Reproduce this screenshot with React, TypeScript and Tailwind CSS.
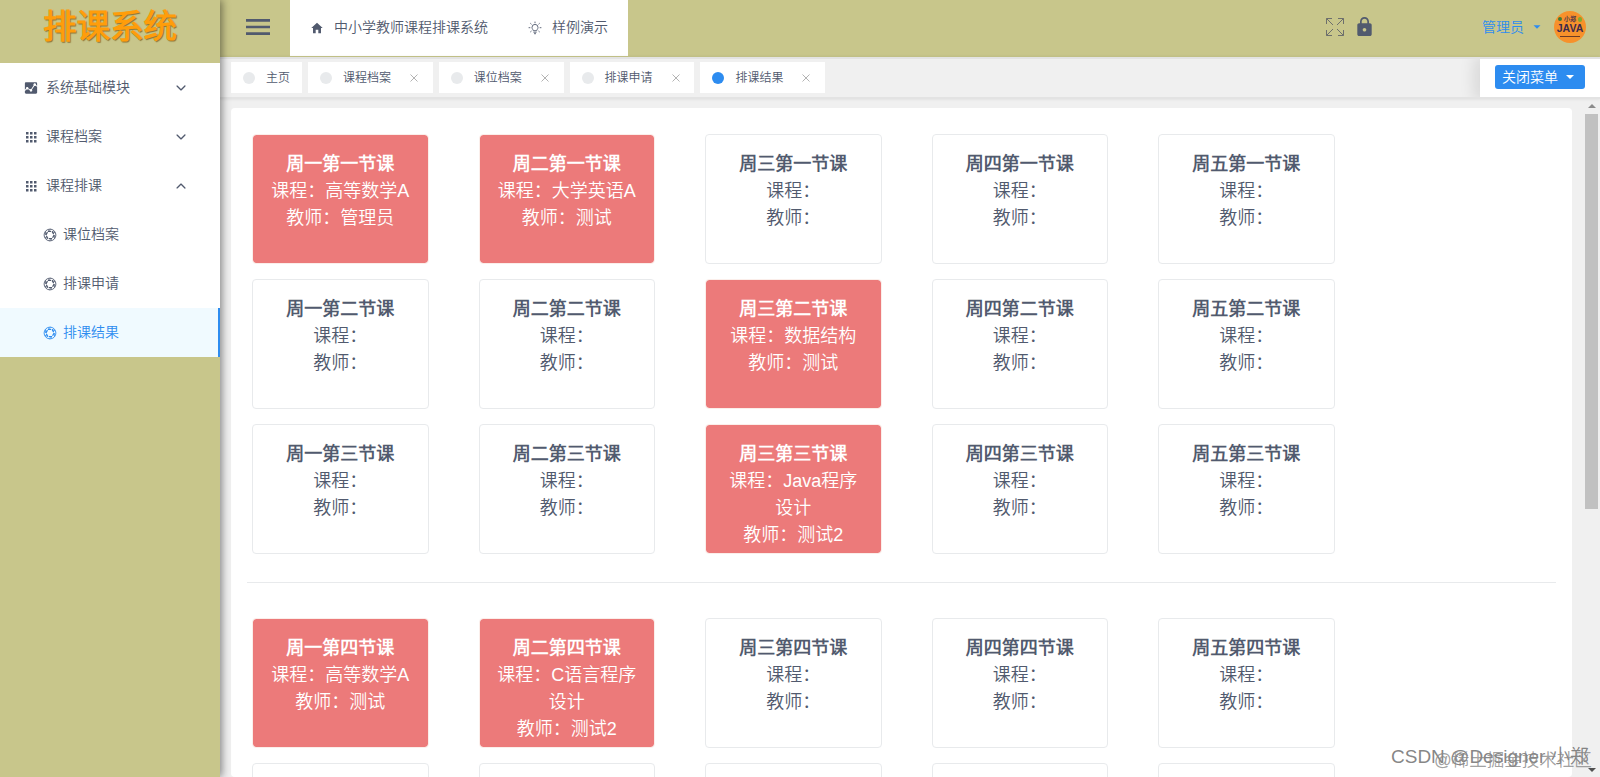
import React from 'react';
import {
  IoIosArrowDown, IoIosArrowUp, IoMdAnalytics, IoMdArrowDropdown, IoMdHome, IoMdLock, IoMdMenu,
} from 'react-icons/io';

interface Lesson {
  course: string;
  teacher: string;
}

const DAYS = ['周一', '周二', '周三', '周四', '周五'];

const MORNING = ['第一节课', '第二节课', '第三节课'];
const AFTERNOON = ['第四节课', '第五节课'];

const LESSONS: Record<string, Lesson> = {
  '周一第一节课': { course: '高等数学A', teacher: '管理员' },
  '周二第一节课': { course: '大学英语A', teacher: '测试' },
  '周三第二节课': { course: '数据结构', teacher: '测试' },
  '周三第三节课': { course: 'Java程序设计', teacher: '测试2' },
  '周一第四节课': { course: '高等数学A', teacher: '测试' },
  '周二第四节课': { course: 'C语言程序设计', teacher: '测试2' },
};

const TABS = [
  { name: '主页', closable: false },
  { name: '课程档案', closable: true },
  { name: '课位档案', closable: true },
  { name: '排课申请', closable: true },
  { name: '排课结果', closable: true, active: true },
];

const GridIcon = () => (
  <svg width="14" height="14" viewBox="0 0 14 14" fill="currentColor">
    {[2, 6, 10].map((y) => [2, 6, 10].map((x) => (
      <rect key={`${x}-${y}`} x={x} y={y} width="2.5" height="2.5" />
    )))}
  </svg>
);

const ApertureIcon = () => (
  <svg width="14" height="14" viewBox="0 0 14 14" fill="none" stroke="currentColor" strokeWidth="0.9">
    <circle cx="7" cy="7" r="5.9" />
    <path d="M4.9 3.4h4.2L11.2 7l-2.1 3.6H4.9L2.8 7z" strokeWidth="1.3" strokeDasharray="3.2 1" />
    <path d="M4.9 3.4L7.6 1.2M9.1 3.4l3 1.4M11.2 7l.4 3.4M9.1 10.6l-2.7 2.2M4.9 10.6l-3-1.4M2.8 7l-.4-3.4" strokeWidth="0.8" />
  </svg>
);

const BulbIcon = () => (
  <svg width="14" height="14" viewBox="0 0 14 14" fill="none" stroke="currentColor" strokeWidth="0.9" className="ml-10">
    <path d="M5.3 9.7C5.3 8.6 4 8.1 4 6.4a3 3 0 0 1 6 0c0 1.7-1.3 2.2-1.3 3.3z" />
    <path d="M5.4 11.2h3.2M6 12.7h2M7 .6v1.6M.6 6.7h1.7M11.7 6.7h1.7M2.3 2.2l1.2 1.1M11.7 2.2l-1.2 1.1M2.3 11l1.2-1M11.7 11l-1.2-1" />
  </svg>
);

const ExpandIcon = () => (
  <svg width="20" height="20" viewBox="0 0 20 20" fill="none" stroke="#6d6f6c" strokeWidth="1" className="mr-px">
    <path d="M1.5 7V1.5H7M1.5 1.5L8 8M13 1.5h5.500V7M18.500 1.500L12 8M1.500 13v5.500H7M1.500 18.500L8 12M13 18.500h5.500V13M18.500 18.500L12 12" />
  </svg>
);

const CloseIcon = () => (
  <svg width="8" height="8" viewBox="0 0 8 8" fill="none" stroke="#aaa" strokeWidth="0.9" className="ml-[19px]">
    <path d="M.5.5l7 7M7.500.5l-7 7" />
  </svg>
);

const LessonCard: React.FC<{ title: string }> = ({ title }) => {
  const lesson = LESSONS[title];
  return (
    <div
      className={`w-[176.5px] h-[130px] shrink-0 rounded-[4px] border px-4 pt-4 text-center text-[18px] leading-[27px] overflow-hidden bg-clip-padding ${
        lesson ? 'bg-[#ec7a7a] text-white border-[#fbeeea]' : 'bg-white border-[#e8eaec]'
      }`}
    >
      <h3 className="font-bold">{title}</h3>
      <p>课程：{lesson?.course}</p>
      <p>教师：{lesson?.teacher}</p>
    </div>
  );
};

const Timetable: React.FC<{ periods: string[] }> = ({ periods }) => (
  <div className="flex flex-col gap-[15px]">
    {periods.map((period) => (
      <div key={period} className="flex gap-[50px]">
        {DAYS.map((day) => (
          <LessonCard key={day} title={day + period} />
        ))}
      </div>
    ))}
  </div>
);

const Sidebar = () => (
  <aside className="relative z-20 w-[220px] shrink-0 bg-[#c8c68b] shadow-[2px_0_8px_rgba(0,0,0,0.45)]">
    <div className="h-[63px] flex justify-center pt-[2px]">
      <span className="text-[33.5px] leading-[50px] font-bold text-[#ff9d0a] [text-shadow:1px_1px_1px_#8a7434]">排课系统</span>
    </div>
    <nav className="bg-white text-[14px]">
      <div className="h-[49px] flex items-center pl-6 pr-8">
        <IoMdAnalytics size={14} />
        <span className="ml-[8px] flex-1">系统基础模块</span>
        <IoIosArrowDown size={14} />
      </div>
      <div className="h-[49px] flex items-center pl-6 pr-8">
        <GridIcon />
        <span className="ml-[8px] flex-1">课程档案</span>
        <IoIosArrowDown size={14} />
      </div>
      <div className="h-[49px] flex items-center pl-6 pr-8">
        <GridIcon />
        <span className="ml-[8px] flex-1">课程排课</span>
        <IoIosArrowUp size={14} />
      </div>
      {['课位档案', '排课申请', '排课结果'].map((name) => (
        <div
          key={name}
          className={`h-[49px] flex items-center pl-[43px] ${name === '排课结果' ? 'bg-[#f0faff] text-[#2d8cf0] border-r-2 border-[#2d8cf0]' : ''}`}
        >
          <ApertureIcon />
          <span className="ml-[6px]">{name}</span>
        </div>
      ))}
    </nav>
  </aside>
);

const Header = () => (
  <header className="h-[57px] flex bg-[#c8c68b]">
    <div className="w-[70px] flex items-center pl-[22px] pb-[3px]">
      <IoMdMenu size={32} />
    </div>
    <div className="w-[338px] h-[56px] bg-white flex items-center pl-5 pb-px text-[14px]">
      <IoMdHome size={14} />
      <span className="ml-[10px]">中小学教师课程排课系统</span>
      <BulbIcon />
      <span className="ml-[10px]">样例演示</span>
    </div>
    <div className="flex-1 flex items-center justify-end pr-[14px] pb-[3px]">
      <ExpandIcon />
      <IoMdLock size={23} className="ml-[7px] mb-[2px]" />
      <span className="ml-[106px] text-[14px] text-[#2d8cf0]">管理员</span>
      <IoMdArrowDropdown size={14} className="ml-[6px] text-[#2d8cf0]" />
      <div className="ml-[10px] w-8 h-8 rounded-full bg-[#f7912b] overflow-hidden flex flex-col items-center text-[#3c2a4d] leading-none">
        <span className="mt-[5px] flex items-center text-[6px] font-bold">
          <i className="w-1 h-1 mr-[2px] rounded-full bg-[#3f7a35]" />小郑<i className="w-1 h-[5px] ml-[2px] rounded-full bg-[#86a82e]" />
        </span>
        <span className="mt-px text-[10.5px] font-bold">JAVA</span>
        <i className="mt-[2px] w-5 h-0 border-t border-[#6b3a26]" />
      </div>
    </div>
  </header>
);

const TagsNav = () => (
  <div className="h-[42px] flex bg-[#f0f0f0] border-y-2 border-[#e3e3e3] shadow-[0_0_3px_rgba(0,0,0,0.1)]">
    <div className="flex-1 flex gap-[6px] pl-[11px] pt-[3px]">
      {TABS.map((tab) => (
        <div
          key={tab.name}
          className={`h-[31px] bg-white flex items-center pl-3 text-[12px] ${tab.closable ? 'w-[124.8px]' : 'w-[71px]'}`}
        >
          <i className={`w-3 h-3 rounded-full ${tab.active ? 'bg-[#2d8cf0]' : 'bg-[#e8eaec]'}`} />
          <span className="ml-[11px]">{tab.name}</span>
          {tab.closable && <CloseIcon />}
        </div>
      ))}
    </div>
    <div className="w-[120px] bg-white pl-[15px] pt-[6px] shadow-[-3px_0_15px_3px_rgba(0,0,0,0.1)] [clip-path:inset(0_0_0_-20px)]">
      <button className="w-[90px] h-6 rounded-[3px] bg-[#2d8cf0] text-white text-[14px] flex items-center pl-[7px]">
        关闭菜单
        <IoMdArrowDropdown size={16} className="ml-[4px]" />
      </button>
    </div>
  </div>
);

export default function App() {
  return (
    <div className="relative w-[1600px] h-[777px] overflow-hidden flex bg-[#f0f0f0] text-[#515a6e] font-[350] font-['Liberation_Sans','Noto_Sans_CJK_SC_DemiLight','Noto_Sans_CJK_SC',sans-serif]">
      <Sidebar />
      <div className="flex-1 min-w-0 flex flex-col">
        <Header />
        <TagsNav />
        <div className="flex-1 min-h-0 flex">
          <main className="ml-[11px] mt-[9px] w-[1341px] bg-white rounded-[4px] px-4 pt-[26px] overflow-hidden">
            <div className="pl-[5px]">
              <Timetable periods={MORNING} />
            </div>
            <hr className="mt-[28px] mb-[35px] border-[#e8eaec]" />
            <div className="pl-[5px]">
              <Timetable periods={AFTERNOON} />
            </div>
          </main>
          <div className="ml-auto w-[17px] flex flex-col items-center pt-[5px] pb-[5px]">
            <i className="border-x-4 border-b-4 border-x-transparent border-b-[#8c8c8c]" />
            <i className="mt-[6px] w-[13px] h-[395px] bg-[#c1c1c1]" />
            <i className="mt-auto border-x-4 border-t-4 border-x-transparent border-t-[#505050]" />
          </div>
        </div>
      </div>
      <span className="absolute z-30 left-[1391px] top-[743px] text-[19px] leading-7 text-[#666]/80 whitespace-nowrap">CSDN @Designer 小郑</span>
      <span className="absolute z-30 left-[1434px] top-[746px] text-[17.5px] leading-7 text-[#888]/80 whitespace-nowrap">@稀土掘金技术社区</span>
    </div>
  );
}
